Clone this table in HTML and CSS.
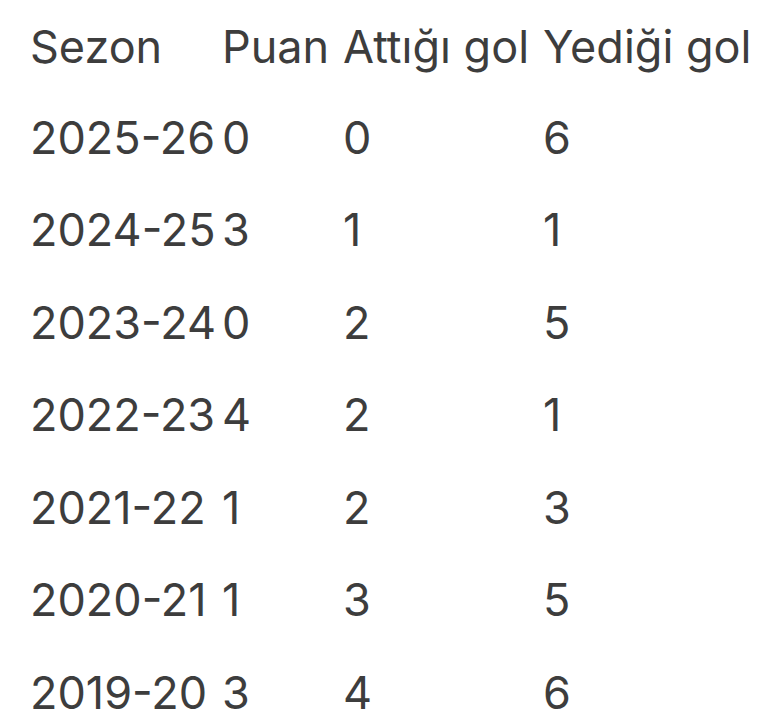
FILE: index.html
```html
<!DOCTYPE html>
<html lang="tr">
<head>
<meta charset="utf-8">
<link rel="stylesheet" href="styles.css">
</head>
<body>
<table class="stats">
  <thead>
    <tr class="head-row">
      <th class="c-season">Sezon</th>
      <th class="c-points">Puan</th>
      <th class="c-scored">Attığı gol</th>
      <th class="c-conceded">Yediği gol</th>
    </tr>
  </thead>
  <tbody>
    <tr><td>2025-26</td><td>0</td><td>0</td><td>6</td></tr>
    <tr><td>2024-25</td><td>3</td><td>1</td><td>1</td></tr>
    <tr><td>2023-24</td><td>0</td><td>2</td><td>5</td></tr>
    <tr><td>2022-23</td><td>4</td><td>2</td><td>1</td></tr>
    <tr><td>2021-22</td><td>1</td><td>2</td><td>3</td></tr>
    <tr><td>2020-21</td><td>1</td><td>3</td><td>5</td></tr>
    <tr><td>2019-20</td><td>3</td><td>4</td><td>6</td></tr>
  </tbody>
</table>
</body>
</html>
```
FILE: styles.css
```css
html, body {
  margin: 0;
  padding: 0;
  background: #ffffff;
}

body {
  font-family: "Inter", "Noto Sans", sans-serif;
  color: #3d3d3d;
}

.stats {
  border-collapse: collapse;
  table-layout: fixed;
  margin: 2px 0 0 30px;
  font-size: 45px;
  font-weight: 400;
}

.stats th,
.stats td {
  padding: 0;
  text-align: left;
  font-weight: 400;
  white-space: nowrap;
  vertical-align: middle;
}

.head-row {
  height: 89px;
}

.stats tbody tr {
  height: 92.5px;
}

.c-season { width: 192px; }
.c-points { width: 121px; }
.c-scored { width: 200px; }
.c-conceded { width: 220px; }
```
